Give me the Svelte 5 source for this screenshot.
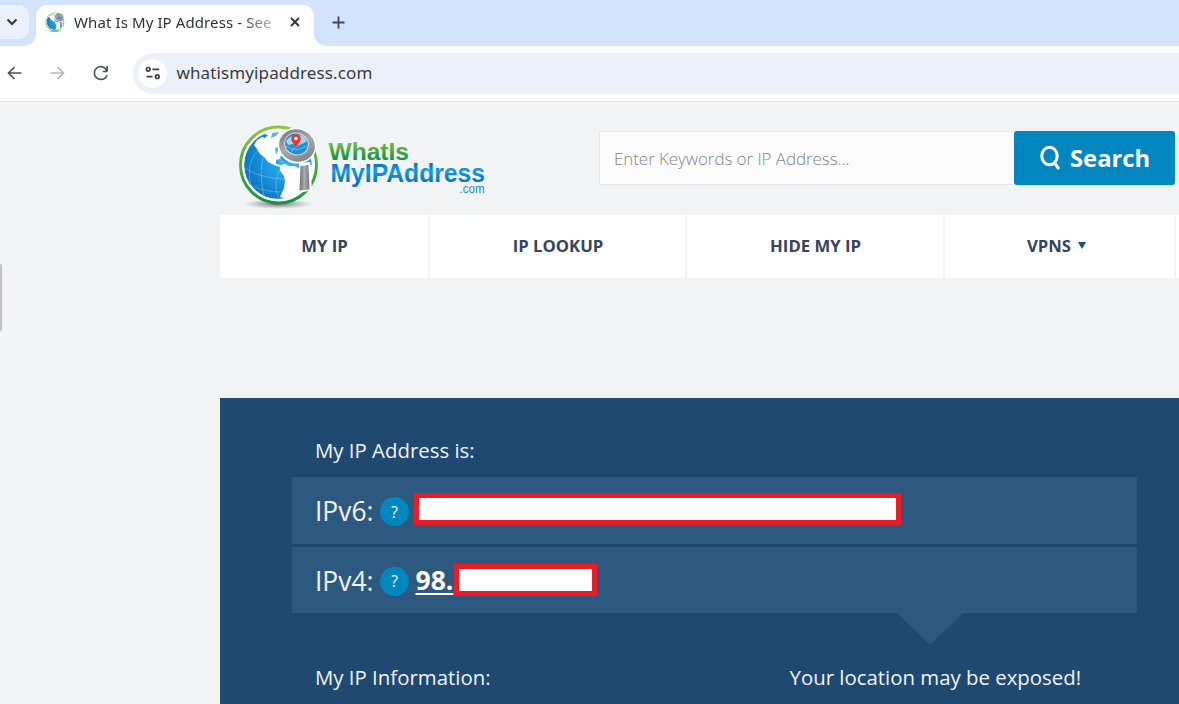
<script>
  const nav = [
    { label: 'MY IP', width: 208 },
    { label: 'IP LOOKUP', width: 255 },
    { label: 'HIDE MY IP', width: 256 },
    { label: 'VPNS', width: 229, menu: true },
    { label: '', width: 100 }
  ];
</script>

{#snippet globe()}
  <svg viewBox="0 0 84 92" aria-hidden="true">
    <defs>
      <linearGradient id="ring" x2="0" y2="1"><stop stop-color="#8bc63f" /><stop offset="1" stop-color="#179447" /></linearGradient>
      <radialGradient id="sea" cx=".68" cy=".4" r=".75"><stop stop-color="#41baf0" /><stop offset=".55" stop-color="#1b93dc" /><stop offset="1" stop-color="#0870bd" /></radialGradient>
      <linearGradient id="metal"><stop stop-color="#6f7377" /><stop offset=".5" stop-color="#a9acae" /><stop offset="1" stop-color="#75797c" /></linearGradient>
      <linearGradient id="rim" x2="1" y2="1"><stop stop-color="#73777b" /><stop offset=".5" stop-color="#a6a9ab" /><stop offset="1" stop-color="#74787b" /></linearGradient>
      <radialGradient id="shade"><stop stop-color="#555" stop-opacity=".85" /><stop offset="1" stop-color="#888" stop-opacity="0" /></radialGradient>
      <clipPath id="ball"><circle cx="41" cy="41" r="34" /></clipPath>
    </defs>
    <ellipse cx="41" cy="80" rx="35" ry="5" fill="url(#shade)" />
    <circle cx="41.500" cy="41" r="38" fill="#fff" stroke="url(#ring)" stroke-width="3" />
    <g clip-path="url(#ball)">
      <circle cx="41" cy="41" r="34" fill="url(#sea)" />
      <path d="M5 42Q30 60 70 53M8 59q28 14 57 7M34 20Q18 38 28 76M46 40q-12 18-4 35M22 25Q8 38 14 62" fill="none" stroke="#9cdcf5" stroke-width=".7" opacity=".6" />
      <path fill="#fff" d="M17 21l3-5 5-3 3 1 3-3-4-1 5-4 6 1 5-4 12-3 20 7 8 18-1 5-16 1-6-3-3-3-4 3-4 1-3 5 2 3-3 1-2-3-4 1 0 4 5 1 2 4 4 1-2 1-5-4-6-2-6-3-4-5-4-3-3-5z" />
      <path fill="#fff" d="M44 41l4-1 4 2 5 0 5 2 15-4v22L54 76l-11-3 4-9 1-7-1-5-4-5z" />
      <path fill="#58b5e9" d="M35 9l7-1-3 4-5 2zM38 24l4-1-1 4-2 4z" />
      <path fill="#2b9fdf" d="M43 33l4-3 2 4 5 2-4 2-6-1z" />
    </g>
    <path d="M62 39l11-1 2 28-13 3z" fill="#fff" />
    <path d="M63.500 42l8-1 1 24.500-10 1z" fill="url(#metal)" />
    <ellipse cx="60" cy="21.500" rx="19.500" ry="18" transform="rotate(15 60 21.500)" fill="#f7f9fa" />
    <ellipse cx="60" cy="21.500" rx="18" ry="16" transform="rotate(15 60 21.500)" fill="url(#rim)" />
    <ellipse cx="59.500" cy="20" rx="12" ry="10.800" transform="rotate(15 59.500 20)" fill="#238fd0" stroke="#d5d9db" stroke-width="1" />
    <path d="M49 17q4-6 12-6 7 0 9 6l-5 3-4 1-5-1-5 1z" fill="#a9d3ea" />
    <path d="M49 22q9 7 21 0M54 28q6-8 15-10" fill="none" stroke="#6cc6ef" stroke-width=".8" />
    <path d="M59 24c-1-4-4.800-5.500-4.800-9a4.800 4.800 0 019.600 0c0 3.500-3.800 5-4.800 9z" fill="#e33732" />
    <circle cx="59" cy="14.500" r="1.800" fill="#fff" />
  </svg>
{/snippet}

<div class="window">
  <div class="tabs">
    <div class="chevron"><svg width="12" height="8" viewBox="0 0 12 8"><path d="M1.500 1.500L6 6l4.500-4.500" /></svg></div>
    <div class="tab">
      <div class="favicon">{@render globe()}</div>
      <span class="title">What Is My IP Address - See</span>
      <svg class="close" width="10" height="10" viewBox="0 0 10 10"><path d="M1 1l8 8M9 1L1 9" /></svg>
    </div>
    <svg class="plus" width="13" height="13" viewBox="0 0 13 13"><path d="M6.500 .5v12M.5 6.500h12" /></svg>
  </div>
  <div class="toolbar">
    <svg class="back" width="16" height="16" viewBox="0 0 16 16"><path d="M14.500 8H1.500M7.500 2L1.500 8l6 6" /></svg>
    <svg class="forward" width="16" height="16" viewBox="0 0 16 16"><path d="M.5 8h13M7.500 2l6 6-6 6" /></svg>
    <svg class="reload" width="16" height="16" viewBox="0 0 16 16"><path d="M14.200 6.500H9.700M14.200 1v5.500M13.800 6A6.400 6.400 0 108 14.400a6.300 6.300 0 006-4.200" /></svg>
    <div class="address">
      <div class="tune"><svg width="16" height="16" viewBox="0 0 16 16"><circle cx="3.200" cy="4.300" r="1.800" /><path d="M7.500 4.300h6.500M1.500 11.700h6" /><circle cx="12.300" cy="11.700" r="1.800" /></svg></div>
      <span>whatismyipaddress.com</span>
    </div>
  </div>

  <main>
    <i class="handle"></i>
    <header>
      <div class="logo">
        <div class="globe">{@render globe()}</div>
        <div class="wordmark">
          <svg width="162" height="27" viewBox="0 0 162 27">
            <defs>
              <linearGradient id="green" gradientUnits="userSpaceOnUse" x1="0" y1="5" x2="0" y2="24"><stop stop-color="#86c440" /><stop offset="1" stop-color="#159447" /></linearGradient>
              <linearGradient id="blue" gradientUnits="userSpaceOnUse" x1="0" y1="0" x2="0" y2="20"><stop stop-color="#0868b4" /><stop offset=".45" stop-color="#119ce5" /><stop offset="1" stop-color="#0873bf" /></linearGradient>
            </defs>
            <text x="2.500" y="25" font-size="24.500" textLength="80.500" lengthAdjust="spacingAndGlyphs" fill="url(#green)">WhatIs</text>
          </svg>
          <svg width="162" height="22" viewBox="0 0 162 22"><text x="4.500" y="19.500" font-size="25" textLength="154.500" lengthAdjust="spacingAndGlyphs" fill="url(#blue)">MyIPAddress</text></svg>
          <svg class="suffix" width="162" height="12" viewBox="0 0 162 12"><text x="133.500" y="8.500" font-size="12" textLength="25" lengthAdjust="spacingAndGlyphs" fill="#2189cd">.com</text></svg>
        </div>
      </div>
      <div class="search">
        <div class="field"><span>Enter Keywords or IP Address...</span></div>
        <div class="button">
          <svg width="22" height="26" viewBox="0 0 22 26"><ellipse cx="9.500" cy="11" rx="7.700" ry="8.700" /><path d="M14.500 18l4.500 6" /></svg>
          <span>Search</span>
        </div>
      </div>
    </header>
    <nav>
      {#each nav as item}
        <div class="item" class:menu={item.menu} style:width="{item.width}px"><span>{item.label}</span>{#if item.menu}<i></i>{/if}</div>
      {/each}
    </nav>
    <section>
      <h2 class="intro">My IP Address is:</h2>
      <div class="row first"><span class="kind">IPv6:</span><span class="help">?</span><div class="mask wide"></div></div>
      <div class="row second"><span class="kind">IPv4:</span><span class="help">?</span><b>98.</b><div class="mask short"></div></div>
      <div class="details"><h2 class="info">My IP Information:</h2><h2 class="exposed">Your location may be exposed!</h2></div>
    </section>
  </main>
</div>

<style>
  :global(body) { margin: 0; overflow: hidden; }
  * { box-sizing: border-box; }
  svg { display: block; fill: none; overflow: visible; flex: none; }
  .window { width: 1179px; height: 704px; overflow: hidden; display: flex; flex-direction: column; font-family: "Noto Sans", sans-serif; background: #fff; }
  .tabs { height: 46px; background: #d3e2fd; display: flex; align-items: flex-start; }
  .chevron { width: 29px; height: 34px; margin-top: 5px; border-radius: 0 10px 10px 0; background: #eaf0fc; display: flex; align-items: center; padding-left: 6px; stroke: #303234; stroke-width: 2; }
  .tab { position: relative; margin: 5px 0 0 7px; width: 278px; height: 41px; border-radius: 11px 11px 0 0; background: #fff; display: flex; align-items: center; padding: 0 0 7px 9px; }
  .tab::before, .tab::after { content: ""; position: absolute; bottom: 0; width: 12px; height: 12px; }
  .tab::before { left: -12px; background: radial-gradient(circle at 0 0, transparent 11.5px, #fff 12px); }
  .tab::after { right: -12px; background: radial-gradient(circle at 100% 0, transparent 11.5px, #fff 12px); }
  .favicon { width: 20px; height: 22px; margin-top: 2px; }
  .favicon svg { width: 20px; height: 22px; }
  .title { width: 200px; margin-left: 9px; font-size: 15px; letter-spacing: .1px; line-height: 22px; white-space: nowrap; color: #303234; mask-image: linear-gradient(to right, #000 84%, transparent 106%); }
  .close { margin-left: 16px; stroke: #303234; stroke-width: 1.8; }
  .plus { margin: 16px 0 0 18px; stroke: #45484b; stroke-width: 1.8; }
  .toolbar { height: 56px; border-bottom: 1px solid #e3e4e3; display: flex; align-items: center; padding: 0 0 1px 7px; stroke-width: 1.7; }
  .back, .reload { stroke: #505356; }
  .forward { stroke: #b5b7b9; margin-left: 27px; }
  .reload { margin-left: 27px; }
  .address { flex: 1; height: 41px; margin-left: 24px; border-radius: 21px 0 0 21px; background: #ecf0fa; display: flex; align-items: center; padding-left: 5px; font-size: 17px; letter-spacing: .12px; color: #3a3c3f; }
  .address span { margin-top: -1px; }
  .tune { width: 29px; height: 29px; border-radius: 50%; background: #fff; display: grid; place-items: center; stroke: #3d3f42; margin-right: 9.5px; }
  main { position: relative; flex: 1; min-height: 0; background: #f1f3f5; padding-left: 219.5px; font-family: "Open Sans", sans-serif; }
  .handle { position: absolute; left: -5px; top: 161px; width: 7px; height: 69px; border-radius: 4px; background: #c2bfc4; }
  header { height: 113px; display: flex; align-items: flex-start; }
  .logo { width: 379.5px; display: flex; padding: 22px 0 0 17.5px; }
  .globe { width: 84px; height: 88px; }
  .globe svg { width: 84px; height: 92px; }
  .wordmark { margin: 11px 0 0 5px; font-family: "Liberation Sans", sans-serif; font-weight: 700; }
  .suffix { font-weight: 400; }
  .search { display: flex; margin-top: 29px; height: 54px; }
  .field { width: 415px; border: 1px solid #e5e6e7; border-right: 0; background: #fcfcfc; display: flex; align-items: center; padding-left: 14px; color: #858585; font-weight: 300; font-size: 17px; letter-spacing: -.08px; white-space: nowrap; }
  .button { width: 161px; border-radius: 3px; background: #0087bf; color: #fff; display: flex; align-items: center; gap: 8px; padding-left: 26px; font-weight: 700; font-size: 23.8px; }
  .button svg { stroke: #fff; stroke-width: 3; }
  nav { height: 63px; display: flex; gap: 2px; width: 959px; margin-left: .5px; overflow: hidden; }
  .item { flex: none; background: #fff; display: flex; justify-content: center; align-items: center; color: #35455a; font-size: 16.7px; font-weight: 700; padding: 0 0 2px 1px; }
  .item.menu { padding: 0 6px 2px 0; }
  .item i { border: 4px solid transparent; border-top: 7px solid #1f4b75; border-bottom: 0; margin-left: 7px; }
  section { height: 306px; margin-top: 120px; background: #204971; color: #f0f4f7; overflow: hidden; padding-left: 72px; }
  h2 { margin: 0; font-weight: 400; font-size: 20.4px; line-height: 28px; white-space: nowrap; }
  .intro { margin: 38px 0 13px 23.5px; }
  .row { position: relative; width: 845px; background: #2d5980; display: flex; align-items: center; padding-left: 23.5px; }
  .first { height: 67px; margin-bottom: 3px; }
  .second { height: 66px; }
  .second::after { content: ""; position: absolute; left: 605.5px; top: 66px; border: 33px solid transparent; border-top: 32px solid #2d5980; border-bottom: 0; }
  .kind { width: 65px; font-size: 26.4px; line-height: 36px; margin-top: 1px; white-space: nowrap; }
  .help { width: 29px; height: 29px; border-radius: 50%; background: #0087bf; display: grid; place-items: center; font-size: 16px; margin-top: 2px; }
  .mask { height: 32px; border: 5px solid #ed1c24; background: #fff; flex: none; }
  .wide { width: 487px; margin: -3px 0 0 5px; }
  .short { width: 143px; margin-top: -1px; }
  b { width: 38.5px; margin-left: 6.5px; font-size: 26.5px; line-height: 30px; text-decoration: underline; text-decoration-thickness: 2px; text-underline-offset: 3px; color: #fff; white-space: nowrap; }
  .details { display: flex; margin-top: 50px; }
  .info { margin-left: 23.5px; width: 474.5px; }
</style>
